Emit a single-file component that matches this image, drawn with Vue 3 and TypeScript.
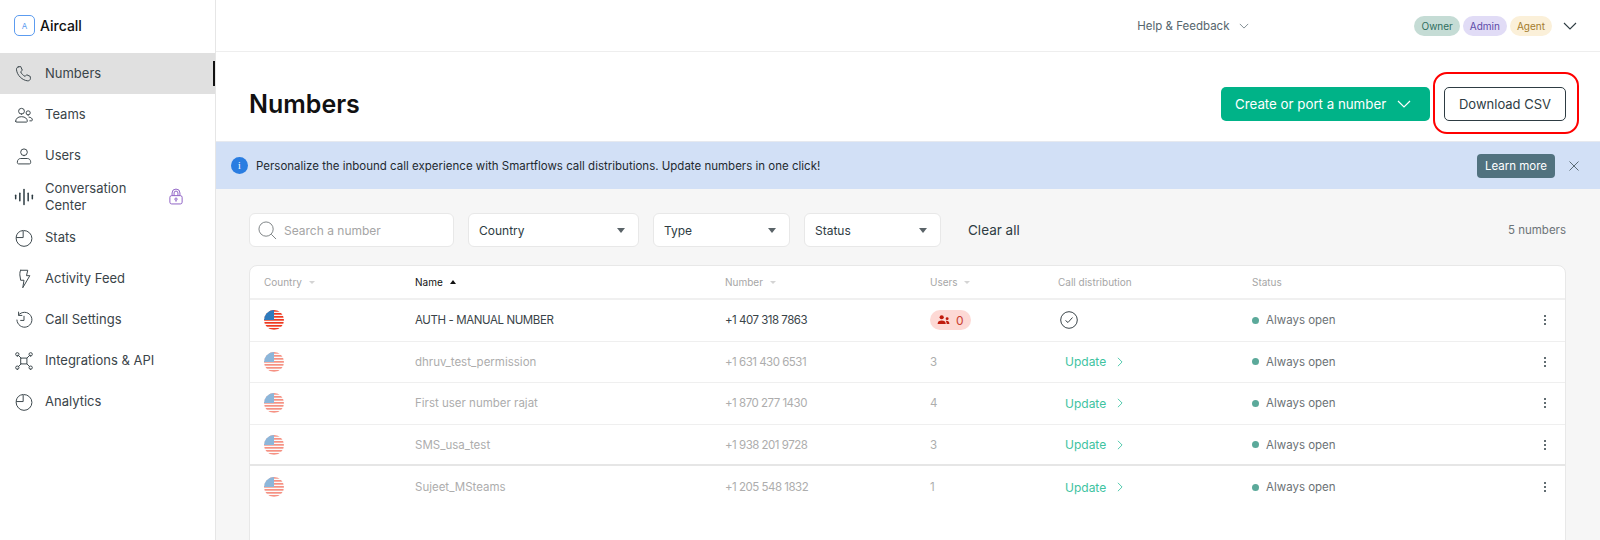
<script setup lang="ts">
interface NavItem {
  label: string
  paths: string[]
  locked?: boolean
  heavy?: boolean
}

interface NumberRow {
  name: string
  number: string
  users: number
  active?: boolean
}

const statsPaths = ['M12 3a9.500 9.500 0 1 1-9.500 9.500', 'M2.500 11A9.500 9.500 0 0 1 11 3v8z']

const navItems: NavItem[] = [
  { label: 'Numbers', paths: ['M5 3.500 8 3l2 4.500-2 1.800c.9 2.400 2.800 4.300 5.400 5.600l1.800-2 4.300 2 .2 2.800c-.3 1.600-1.600 2.600-3.200 2.500C9.700 19.600 3.800 13.500 3 7c-.2-1.700.5-3 2-3.500z'] },
  { label: 'Teams', paths: ['M9 11a3.500 3.500 0 1 0 0-7 3.500 3.500 0 0 0 0 7z', 'M2 19.500c0-3 2.500-5.500 7-5.500s7 2.500 7 5.500c0 .6-.4 1-1 1H3c-.6 0-1-.4-1-1z', 'M17 12a2.500 2.500 0 1 0 0-5 2.500 2.500 0 0 0 0 5z', 'M18 14.500c2.300.2 4 1.500 4 3.500 0 .6-.4 1-1 1h-2'] },
  { label: 'Users', paths: ['M12 11.500a4 4 0 1 0 0-8 4 4 0 0 0 0 8z', 'M4 19c0-2.500 2-4 4-4h8c2 0 4 1.500 4 4v1c0 .8-.6 1.500-1.500 1.500h-13C4.600 21.500 4 20.800 4 20z'] },
  { label: 'Conversation Center', locked: true, heavy: true, paths: ['M2 10v4', 'M7 7.500v9', 'M12 3v18', 'M17 7.500v9', 'M22 10v4'] },
  { label: 'Stats', paths: statsPaths },
  { label: 'Activity Feed', paths: ['M8 1.500h8.500l-1.500 6.500h4L10.500 22.500l1.500-9H8L7 7c0-2 .2-5.500 1-5.500z'] },
  { label: 'Call Settings', paths: ['M5.500 6a9 9 0 1 1-2 6', 'M5.500 2.500V6.500h4', 'M12 7.500v5H8'] },
  { label: 'Integrations & API', paths: ['M8.500 8.500h7v7h-7z', 'M8.500 8.500 5 5', 'M15.500 8.500 19 5', 'M8.500 15.500 5 19', 'M15.500 15.500 18.500 18.500', 'M4 6a2 2 0 1 0 0-4 2 2 0 0 0 0 4z', 'M20 6a2 2 0 1 0 0-4 2 2 0 0 0 0 4z', 'M4 22a2 2 0 1 0 0-4 2 2 0 0 0 0 4z', 'M20 22a2 2 0 1 0 0-4 2 2 0 0 0 0 4z'] },
  { label: 'Analytics', paths: statsPaths },
]

const rows: NumberRow[] = [
  { name: 'AUTH - MANUAL NUMBER', number: '+1 407 318 7863', users: 0, active: true },
  { name: 'dhruv_test_permission', number: '+1 631 430 6531', users: 3 },
  { name: 'First user number rajat', number: '+1 870 277 1430', users: 4 },
  { name: 'SMS_usa_test', number: '+1 938 201 9728', users: 3 },
  { name: 'Sujeet_MSteams', number: '+1 205 548 1832', users: 1 },
]

const filters = [
  { label: 'Country', cls: 'f-country' },
  { label: 'Type', cls: 'f-type' },
  { label: 'Status', cls: 'f-status' },
]

const stripes = [0, 3, 6, 9, 12, 15, 18]
</script>

<template>
  <div class="app">
    <aside class="sidebar">
      <div class="logo">
        <span class="logo-mark">A</span>
        <span class="logo-text">Aircall</span>
      </div>
      <nav class="nav">
        <div v-for="(item, i) in navItems" :key="item.label" class="nav-item" :class="{ selected: i === 0 }">
          <svg class="nav-icon" viewBox="0 0 24 24" fill="none" :stroke="item.heavy ? '#2e3c43' : '#3f4a4f'" :stroke-width="item.heavy ? 1.8 : 1.2" stroke-linecap="round" stroke-linejoin="round">
            <path v-for="d in item.paths" :key="d" :d="d" />
          </svg>
          <span class="nav-label">{{ item.label }}</span>
          <svg v-if="item.locked" class="lock" viewBox="0 0 16 18" fill="none" stroke="#8c5fc4" stroke-width="1.100">
            <path d="M3.500 8V5a4.500 4.500 0 0 1 9 0v3" />
            <path d="M5.800 8V5a2.200 2.200 0 0 1 4.400 0v3" />
            <rect x="1" y="8" width="14" height="9.500" rx="2" />
            <circle cx="8" cy="12" r="1.300" />
            <path d="M8 13.300V15" />
          </svg>
        </div>
      </nav>
    </aside>

    <main class="main">
      <header class="topbar">
        <span class="help">Help &amp; Feedback</span>
        <svg class="chev help-chev" viewBox="0 0 12 7" fill="none" stroke="#6b7a80" stroke-width="1"><path d="M1 1l5 5 5-5" /></svg>
        <div class="roles">
          <span class="role owner">Owner</span>
          <span class="role admin">Admin</span>
          <span class="role agent">Agent</span>
        </div>
        <svg class="chev user-chev" viewBox="0 0 14 8" fill="none" stroke="#2e3c43" stroke-width="1.100"><path d="M1 1l6 6 6-6" /></svg>
      </header>

      <section class="heading">
        <h1>Numbers</h1>
        <div class="actions">
          <button class="btn-create">
            Create or port a number
            <svg class="create-chev" viewBox="0 0 14 8" fill="none" stroke="#fff" stroke-width="1.200"><path d="M1 1l6 6 6-6" /></svg>
          </button>
          <div class="download-wrap">
            <button class="btn-download">Download CSV</button>
            <span class="ring"></span>
          </div>
        </div>
      </section>

      <section class="banner">
        <span class="info">i</span>
        <span class="banner-text">Personalize the inbound call experience with Smartflows call distributions. Update numbers in one click!</span>
        <button class="btn-learn">Learn more</button>
        <svg class="close" viewBox="0 0 10 10" fill="none" stroke="#4d5f66" stroke-width="0.900"><path d="M.5.500l9 9M9.500.500l-9 9" /></svg>
      </section>

      <section class="content">
        <div class="filters">
          <div class="search">
            <svg class="search-icon" viewBox="0 0 20 20" fill="none" stroke="#7a7f82" stroke-width="1"><circle cx="8.500" cy="8.500" r="7.500" /><path d="M14 14l5 5" /></svg>
            <span>Search a number</span>
          </div>
          <div v-for="f in filters" :key="f.label" class="select" :class="f.cls">
            <span>{{ f.label }}</span>
            <i class="caret"></i>
          </div>
          <span class="clear">Clear all</span>
          <span class="count">5 numbers</span>
        </div>

        <div class="table">
          <div class="row head">
            <span>Country <i class="caret small"></i></span>
            <span class="sorted">Name <i class="caret small up"></i></span>
            <span>Number <i class="caret small"></i></span>
            <span>Users <i class="caret small"></i></span>
            <span>Call distribution</span>
            <span>Status</span>
          </div>
          <div v-for="(r, i) in rows" :key="r.name" class="row body" :class="{ dim: !r.active, thick: i === 3 }">
            <svg class="flag" viewBox="0 0 20 20">
              <defs>
                <clipPath :id="`flag-${i}`"><circle cx="10" cy="10" r="10" /></clipPath>
              </defs>
              <g :clip-path="`url(#flag-${i})`">
                <rect width="20" height="20" fill="#f8f8f8" />
                <rect v-for="y in stripes" :key="y" x="0" :y="y" width="20" height="1.700" fill="#f0391f" />
                <rect width="10" height="10" fill="#2f7bbd" />
              </g>
            </svg>
            <span class="name">{{ r.name }}</span>
            <span class="number">{{ r.number }}</span>
            <span class="users">
              <span v-if="r.users === 0" class="no-users">
                <svg viewBox="0 0 14 11" fill="#c01a0c"><circle cx="5" cy="2.500" r="2.300" /><path d="M.5 10c0-2.800 1.800-4 4.500-4s4.500 1.200 4.500 4z" /><circle cx="11" cy="4" r="1.600" /><path d="M10.500 10c0-1.500-.3-2.500-1-3.500 2-.5 4 .5 4 3.500z" /></svg>
                0
              </span>
              <template v-else>{{ r.users }}</template>
            </span>
            <span class="dist">
              <svg v-if="r.active" class="check" viewBox="0 0 18 18" fill="none" stroke="#3a4449" stroke-width="1"><circle cx="9" cy="9" r="8.300" /><path d="M5.500 9.500l2.500 2 4.500-5" /></svg>
              <span v-else class="update">Update
                <svg viewBox="0 0 7 12" fill="none" stroke="#00b388" stroke-width="1"><path d="M1 1l5 5-5 5" /></svg>
              </span>
            </span>
            <span class="status"><i class="dot"></i>Always open</span>
            <span class="more"><i></i><i></i><i></i></span>
          </div>
        </div>
      </section>
    </main>
  </div>
</template>

<style scoped>
.app {
  display: grid;
  grid-template-columns: 216px 1fr;
  height: 540px;
  overflow: hidden;
  font-family: "Inter", "Open Sans", sans-serif;
  font-size: 13px;
  color: #2e3c43;
  background: #fff;
}

.sidebar {
  border-right: 1px solid #e6e6e6;
  background: #fff;
}

.logo {
  display: flex;
  align-items: center;
  gap: 5px;
  height: 53px;
  padding: 0 0 2px 14px;
  box-sizing: border-box;
}

.logo-mark {
  display: flex;
  align-items: center;
  justify-content: center;
  width: 19px;
  height: 19px;
  border: 1px solid #5c9cf0;
  border-radius: 5px;
  color: #5c9cf0;
  font-size: 8px;
}

.logo-text {
  font-size: 14px;
  font-weight: 500;
  color: #111;
}

.nav-item {
  position: relative;
  display: flex;
  align-items: center;
  height: 41px;
  padding-left: 14px;
  font-size: 13px;
  color: #3a4449;
}

.nav-item.selected {
  background: #e0e0e0;
}

.nav-item.selected::after {
  content: "";
  position: absolute;
  right: 0;
  top: 8px;
  bottom: 8px;
  width: 2px;
  background: #111;
}

.nav-icon {
  width: 20px;
  height: 20px;
  margin-right: 11px;
  flex-shrink: 0;
}

.nav-label {
  width: 110px;
  line-height: 17px;
}

.lock {
  width: 14px;
  height: 17px;
  margin-left: 14px;
}

.main {
  display: flex;
  flex-direction: column;
  min-width: 0;
}

.topbar {
  display: flex;
  align-items: center;
  height: 52px;
  flex-shrink: 0;
  box-sizing: border-box;
  padding-right: 23px;
  border-bottom: 1px solid #eee;
}

.help {
  margin-left: auto;
  font-size: 11.500px;
  color: #56666d;
}

.chev {
  display: block;
}

.help-chev {
  width: 10px;
  height: 6px;
  margin: 0 165px 0 10px;
}

.roles {
  display: flex;
  gap: 3px;
}

.role {
  display: flex;
  align-items: center;
  height: 20px;
  padding: 0 7px;
  border-radius: 10px;
  font-size: 10px;
}

.owner { background: #c5dcd5; color: #2f6e60; }
.admin { background: #e1dcf6; color: #5b4aa8; }
.agent { background: #fbf0d9; color: #a47c2c; }

.user-chev {
  width: 14px;
  height: 8px;
  margin-left: 11px;
}

.heading {
  display: flex;
  align-items: center;
  justify-content: space-between;
  height: 89px;
  flex-shrink: 0;
  box-sizing: border-box;
  padding: 15px 34px 0 33px;
}

h1 {
  margin: 0;
  font-size: 25px;
  font-weight: 600;
  color: #111;
}

.actions {
  display: flex;
  gap: 14px;
}

.actions button {
  height: 34px;
  font-family: inherit;
  border-radius: 5px;
  box-sizing: border-box;
}

.btn-create {
  display: flex;
  align-items: center;
  gap: 11px;
  width: 209px;
  padding: 0 0 0 14px;
  border: none;
  background: #00b388;
  color: #fff;
  font-size: 13.300px;
}

.create-chev {
  width: 14px;
  height: 8px;
}

.download-wrap {
  position: relative;
}

.btn-download {
  width: 122px;
  padding: 0;
  border: 1px solid #2e3c43;
  background: #fff;
  color: #2e3c43;
  font-size: 13px;
}

.ring {
  position: absolute;
  inset: -15px -13px -13px -11px;
  border: 2px solid #f00;
  border-radius: 14px;
  pointer-events: none;
}

.banner {
  display: flex;
  align-items: center;
  height: 48px;
  flex-shrink: 0;
  box-sizing: border-box;
  padding: 0 21px 0 15px;
  background: #d2e0f6;
  border-top: 1px solid #e6e9ef;
  font-size: 11.500px;
  color: #1f2a30;
}

.info {
  display: flex;
  align-items: center;
  justify-content: center;
  width: 17px;
  height: 17px;
  margin-right: 8px;
  border-radius: 50%;
  background: #2a7de1;
  color: #fff;
  font-size: 10px;
  font-family: "Liberation Serif", serif;
}

.banner-text {
  flex: 1;
}

.btn-learn {
  width: 78px;
  height: 24px;
  padding: 0;
  border: none;
  border-radius: 4px;
  background: #51727f;
  color: #fff;
  font-family: inherit;
  font-size: 11.500px;
}

.close {
  width: 10px;
  height: 10px;
  margin-left: 14px;
}

.content {
  flex: 1;
  padding: 24px 34px 0 33px;
  background: #f6f6f6;
}

.filters {
  display: flex;
  align-items: center;
  gap: 14px;
  height: 34px;
  margin-bottom: 18px;
}

.search,
.select {
  display: flex;
  align-items: center;
  height: 34px;
  box-sizing: border-box;
  background: #fff;
  border: 1px solid #e8e8e8;
  border-radius: 6px;
  font-size: 12px;
}

.search {
  width: 205px;
  padding-left: 8px;
  color: #a5a5a5;
}

.search-icon {
  width: 19px;
  height: 19px;
  margin-right: 7px;
}

.select {
  justify-content: space-between;
  padding: 0 13px 0 10px;
  color: #2e3c43;
}

.f-country { width: 171px; }
.f-type { width: 137px; }
.f-status { width: 137px; }

.caret {
  display: inline-block;
  width: 0;
  height: 0;
  border-left: 4.500px solid transparent;
  border-right: 4.500px solid transparent;
  border-top: 5px solid #5a6368;
}

.caret.small {
  margin-left: 4px;
  vertical-align: 2px;
  border-left-width: 3.500px;
  border-right-width: 3.500px;
  border-top: 3.500px solid #d4d4d4;
}

.caret.up {
  border-top: none;
  border-bottom: 4px solid #111;
}

.clear {
  margin-left: 13px;
  font-size: 13.500px;
  color: #2e3c43;
}

.count {
  margin-left: auto;
  font-size: 11.500px;
  color: #6d7478;
}

.table {
  height: 300px;
  background: #fff;
  border: 1px solid #e8e8e8;
  border-radius: 8px 8px 0 0;
}

.row {
  display: grid;
  grid-template-columns: 151px 310px 205px 128px 194px 1fr 20px;
  align-items: center;
  padding-left: 14px;
  padding-right: 10px;
  box-sizing: border-box;
}

.head {
  height: 34px;
  border-bottom: 2px solid #f0f0f0;
  font-size: 10px;
  color: #a6a6a6;
}

.head .sorted {
  color: #111;
}

.body {
  height: 41.600px;
  border-bottom: 1px solid #efefef;
  font-size: 11.500px;
  color: #3a4449;
}

.body:last-child {
  border-bottom: none;
}

.body.thick {
  border-bottom: 2px solid #e6e6e6;
}

.name {
  letter-spacing: 0;
}

.body:not(.dim) .name {
  letter-spacing: -0.4px;
}

.number {
  letter-spacing: -0.5px;
}

.flag {
  width: 20px;
  height: 20px;
  display: block;
}

.dim .flag {
  opacity: 0.55;
}

.dim .name,
.dim .number,
.dim .users {
  color: #adadad;
}

.no-users {
  display: inline-flex;
  align-items: center;
  gap: 6px;
  height: 20px;
  padding: 0 7px;
  border-radius: 10px;
  background: #fdd9d5;
  color: #c9402f;
  font-size: 12px;
}

.no-users svg {
  width: 13px;
  height: 10px;
}

.check {
  display: block;
  width: 18px;
  height: 18px;
  margin-left: 2px;
}

.update {
  display: inline-flex;
  align-items: center;
  gap: 11px;
  margin-left: 7px;
  font-size: 12px;
  color: #3ec39f;
}

.update svg {
  width: 6px;
  height: 10px;
  opacity: 0.8;
}

.status {
  display: flex;
  align-items: center;
  color: #6b7276;
}

.dot {
  width: 7px;
  height: 7px;
  margin-right: 7px;
  border-radius: 50%;
  background: #5ba99a;
}

.more {
  display: flex;
  flex-direction: column;
  align-items: center;
  gap: 2px;
}

.more i {
  width: 2px;
  height: 2px;
  border-radius: 50%;
  background: #2e3c43;
}
</style>
